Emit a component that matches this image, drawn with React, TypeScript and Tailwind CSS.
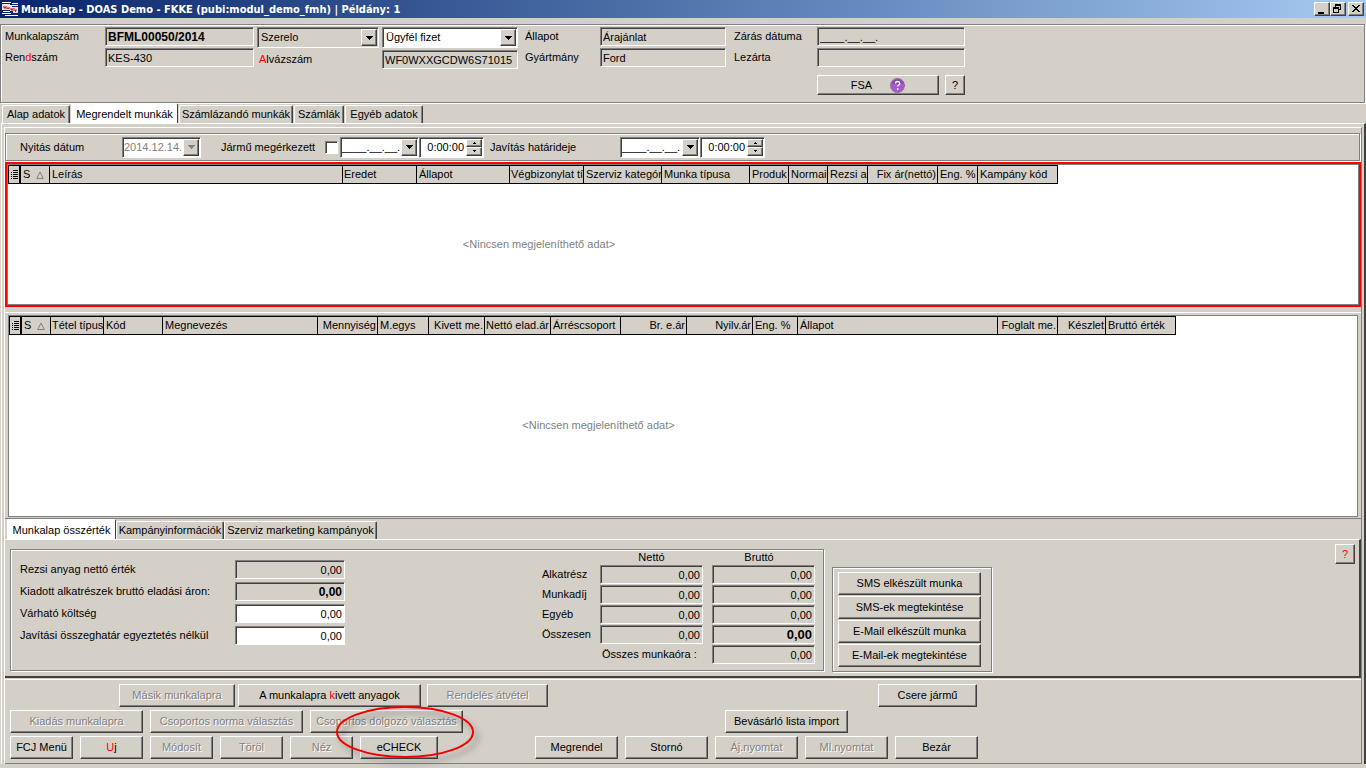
import React from "react";
import { clsx } from "clsx";

const SUNKEN =
  "border border-t-[#808080] border-l-[#808080] border-r-white border-b-white shadow-[inset_1px_1px_0_#404040]";
const RAISED =
  "border border-t-white border-l-white border-r-[#404040] border-b-[#404040] shadow-[inset_-1px_-1px_0_#808080] bg-[#d4d0c8]";
const ETCHED = "border border-[#808080] shadow-[1px_1px_0_#fff,inset_1px_1px_0_#fff]";

type FieldProps = {
  id?: string;
  label?: string;
  value: string;
  editable?: boolean;
  className?: string;
};

function Field({ id, label, value, editable, className }: FieldProps) {
  return (
    <input
      id={id}
      aria-label={label}
      defaultValue={value}
      readOnly={!editable}
      className={clsx(
        SUNKEN,
        "h-[19px] w-full min-w-0 px-[2px] outline-none",
        editable ? "bg-white" : "bg-[#d4d0c8]",
        className,
      )}
    />
  );
}

function Arrow({ disabled }: { disabled?: boolean }) {
  return (
    <svg width="7" height="4" viewBox="0 0 7 4" shapeRendering="crispEdges">
      <path d="M0 0h7v1H0zM1 1h5v1H1zM2 2h3v1H2zM3 3h1v1H3z" fill={disabled ? "#808080" : "#000"} />
    </svg>
  );
}

type ComboProps = {
  id?: string;
  label?: string;
  value: string;
  white?: boolean;
  disabled?: boolean;
  tight?: boolean;
  className?: string;
};

function Combo({ id, label, value, white, disabled, tight, className }: ComboProps) {
  return (
    <div className={clsx(SUNKEN, "relative h-[21px] p-px", white ? "bg-white" : "bg-[#d4d0c8]", className)}>
      <select
        id={id}
        aria-label={label}
        disabled={disabled}
        className={clsx(
          "h-full w-full appearance-none bg-transparent outline-none",
          tight ? "pl-0" : "pl-[2px]",
          disabled && "text-[#808080]",
        )}
      >
        <option>{value}</option>
      </select>
      <span
        className={clsx(
          RAISED,
          "pointer-events-none absolute top-px right-px bottom-px flex w-4 items-center justify-center",
        )}
      >
        <Arrow disabled={disabled} />
      </span>
    </div>
  );
}

function TimeSpin({ label }: { label: string }) {
  return (
    <div className={clsx(SUNKEN, "flex h-[21px] w-[65px] bg-white p-px")}>
      <input aria-label={label} defaultValue="0:00:00" className="w-0 flex-1 pr-[2px] text-right outline-none" />
      <div className="flex w-4 flex-col">
        <button aria-label={label + " +"} className={clsx(RAISED, "flex flex-1 items-center justify-center")}>
          <svg width="3" height="2" shapeRendering="crispEdges">
            <path d="M1 0h1v1H1zM0 1h3v1H0z" />
          </svg>
        </button>
        <button aria-label={label + " -"} className={clsx(RAISED, "flex flex-1 items-center justify-center")}>
          <svg width="3" height="2" shapeRendering="crispEdges">
            <path d="M0 0h3v1H0zM1 1h1v1H1z" />
          </svg>
        </button>
      </div>
    </div>
  );
}

type BtnProps = { children: React.ReactNode; disabled?: boolean; className?: string };

function Btn({ children, disabled, className }: BtnProps) {
  return (
    <button
      disabled={disabled}
      className={clsx(
        RAISED,
        "h-[23px] shrink-0 whitespace-nowrap",
        disabled && "text-[#808080] [text-shadow:1px_1px_0_#fff]",
        className,
      )}
    >
      {children}
    </button>
  );
}

function Tab({ children, active, className }: { children: React.ReactNode; active?: boolean; className: string }) {
  return (
    <button
      role="tab"
      aria-selected={!!active}
      className={clsx(
        "shrink-0 rounded-t-[2px] border border-b-0 border-t-white border-l-white border-r-[#404040] whitespace-nowrap",
        active ? "-mb-px h-[21px] bg-white" : "h-[18px] bg-[#d4d0c8] shadow-[inset_-1px_0_0_#808080]",
        className,
      )}
    >
      {children}
    </button>
  );
}

type Col = { t: string; w: number; r?: boolean };

const JOB_COLS: Col[] = [
  { t: "Leírás", w: 293 },
  { t: "Eredet", w: 74 },
  { t: "Állapot", w: 93 },
  { t: "Végbizonylat tí", w: 74 },
  { t: "Szerviz kategór", w: 78 },
  { t: "Munka típusa", w: 88 },
  { t: "Produk", w: 39 },
  { t: "Normai", w: 39 },
  { t: "Rezsi a", w: 40 },
  { t: "Fix ár(nettó)", w: 70, r: true },
  { t: "Eng. %", w: 40 },
  { t: "Kampány kód", w: 80 },
];

const ITEM_COLS: Col[] = [
  { t: "Tétel típus", w: 53 },
  { t: "Kód", w: 59 },
  { t: "Megnevezés", w: 155 },
  { t: "Mennyiség", w: 60, r: true },
  { t: "M.egys", w: 51 },
  { t: "Kivett me.", w: 56, r: true },
  { t: "Nettó elad.ár", w: 66, r: true },
  { t: "Árréscsoport", w: 70 },
  { t: "Br. e.ár", w: 66, r: true },
  { t: "Nyilv.ár", w: 66, r: true },
  { t: "Eng. %", w: 45 },
  { t: "Állapot", w: 200 },
  { t: "Foglalt me.", w: 60, r: true },
  { t: "Készlet", w: 48, r: true },
  { t: "Bruttó érték", w: 70 },
];

function DataTable({ cols, cellClass }: { cols: Col[]; cellClass: string }) {
  const total = cols.reduce((s, c) => s + c.w, 42);
  return (
    <table className="table-fixed border-separate border-spacing-0" style={{ width: total }}>
      <colgroup>
        <col className="w-[13px]" />
        <col className="w-[29px]" />
        {cols.map((c, i) => (
          <col key={i} style={{ width: c.w }} />
        ))}
      </colgroup>
      <thead>
        <tr className="h-[19px] bg-[#d4d0c8]">
          <th className="border border-r-2 border-black p-0" aria-label="Oszlopok">
            <svg className="mx-auto block" width="7" height="10" shapeRendering="crispEdges">
              <path d="M2 0h5v1H2zM0 2h1v1H0zM2 2h5v1H2zM2 4h5v1H2zM0 4h1v1H0zM2 6h5v1H2zM0 6h1v1H0zM2 8h5v1H2zM0 8h1v1H0z" />
            </svg>
          </th>
          <th className="border-y border-r border-black p-0 pl-[2px] text-left font-normal">
            <span className="flex items-center gap-[6px]">
              S
              <svg width="8" height="8" viewBox="0 0 8 8">
                <path d="M4 1L7.3 7.5H.7z" fill="none" stroke="#808080" />
              </svg>
            </span>
          </th>
          {cols.map((c, i) => (
            <th
              key={i}
              className={clsx(
                "border-y border-r border-black p-0 font-normal whitespace-nowrap",
                c.r ? "pr-px text-right" : "text-left",
                !c.r && (c.w === 74 || c.w === 53 ? "pl-px" : "pl-[2px]"),
              )}
            >
              {c.t}
            </th>
          ))}
        </tr>
      </thead>
      <tbody>
        <tr>
          <td colSpan={cols.length + 2} className={clsx("pl-3 text-center align-middle text-[#808080]", cellClass)}>
            &lt;Nincsen megjeleníthető adat&gt;
          </td>
        </tr>
      </tbody>
    </table>
  );
}

function TitleBar() {
  return (
    <header className="flex h-[18px] items-center bg-linear-to-r from-[#0a246a] to-[#a6caf0] pr-[2px] pl-[2px]">
      <svg width="16" height="14" viewBox="0 0 16 14" shapeRendering="crispEdges">
        <path d="M0 0h9v1H0zM10 1h6v1h-6zM10 3h6v1h-6zM1 9h7v1H1zM0 11h9v1H0zM3 13h13v1H3z" fill="#fff" />
        <path d="M0 2h8v1h2v2h6v6h-5V9H8V8H0z" fill="#ece4e4" />
        <path d="M1 4h4v1h3v2H2V6H1zM8 6h5v1h2v2H9V8H8z" fill="#cc7f80" />
        <path d="M2 5h2v1H2zM5 6h2v1H5zM9 7h2v1H9zM13 8h1v2h-1z" fill="#a03838" />
      </svg>
      <h1 className="ml-[3px] flex-1 font-['DejaVu_Sans_Condensed','DejaVu_Sans',sans-serif] text-[11px] font-bold whitespace-nowrap text-white">
        Munkalap - DOAS Demo - FKKE (pubi:modul_demo_fmh) | Példány: 1
      </h1>
      <div className="flex">
        <button aria-label="Kis méret" className={clsx(RAISED, "h-[14px] w-4")}>
          <svg width="14" height="12" shapeRendering="crispEdges">
            <path d="M3 9h6v2H3z" />
          </svg>
        </button>
        <button aria-label="Előző méret" className={clsx(RAISED, "h-[14px] w-4")}>
          <svg width="14" height="12" shapeRendering="crispEdges">
            <path d="M4 1h6v6H8V6h1V3H5v1H4zM2 4h6v6H2zM3 6v3h4V6z" fillRule="evenodd" />
          </svg>
        </button>
        <button aria-label="Bezárás" className={clsx(RAISED, "ml-[2px] h-[14px] w-4")}>
          <svg width="14" height="12" shapeRendering="crispEdges">
            <path d="M3 2h2v1h1v1h2V3h1V2h2v1h-1v1H9v1H8v1h1v1h1v1h1v1H9V8H8V7H6v1H5v1H3V8h1V7h1V6h1V5H5V4H4V3H3z" />
          </svg>
        </button>
      </div>
    </header>
  );
}

function HeaderBox() {
  return (
    <section className={clsx(ETCHED, "mt-[6px] mr-px flex items-start pt-[2px] pb-[7px] pl-1")}>
      <div className="grid grid-cols-[100px_149px] items-center gap-y-[2px]">
        <label htmlFor="munkalapszam">Munkalapszám</label>
        <Field id="munkalapszam" value="BFML00050/2014" className="text-[12px] font-bold" />
        <label htmlFor="rendszam">
          Ren<span className="text-[#f00]">d</span>szám
        </label>
        <Field id="rendszam" value="KES-430" />
      </div>
      <div className="ml-[3px] grid grid-cols-[125px_136px] items-center gap-y-[2px]">
        <Combo label="Szerep" value="Szerelo" className="mr-[3px]" />
        <Combo label="Fizetés" value="Ügyfél fizet" white />
        <label htmlFor="alvazszam" className="pl-[2px]">
          <span className="text-[#f00]">A</span>lvázszám
        </label>
        <Field id="alvazszam" value="WF0WXXGCDW6S71015" />
      </div>
      <div className="ml-[7px] grid grid-cols-[75px_126px] items-center gap-y-[2px]">
        <label htmlFor="allapot">Állapot</label>
        <Field id="allapot" value="Árajánlat" />
        <label htmlFor="gyartmany">Gyártmány</label>
        <Field id="gyartmany" value="Ford" />
      </div>
      <div className="ml-2 grid grid-cols-[83px_148px] items-center gap-y-[2px]">
        <label htmlFor="zaras">Zárás dátuma</label>
        <Field id="zaras" value="____.__.__." />
        <label htmlFor="lezarta">Lezárta</label>
        <Field id="lezarta" value="" />
        <div className="col-start-2 mt-[6px] flex gap-[6px]">
          <button className={clsx(RAISED, "flex h-5 w-[122px] items-center justify-center gap-[18px]")}>
            FSA
            <svg width="15" height="15" viewBox="0 0 15 15">
              <circle cx="7.5" cy="7.5" r="7" fill="#a45cc8" stroke="#8a50aa" strokeDasharray="2 1" />
              <path d="M2 6a5.6 5.6 0 0 1 11 0z" fill="#7e48a4" />
              <path d="M5.4 5.6c0-2.8 4.4-2.8 4.4-.2 0 1.7-2.1 1.6-2.1 3.2" fill="none" stroke="#fff" strokeWidth="1.4" />
              <circle cx="7.7" cy="11" r=".9" fill="#fff" />
            </svg>
          </button>
          <button className={clsx(RAISED, "h-5 w-5")}>?</button>
        </div>
      </div>
    </section>
  );
}

function DateRow() {
  return (
    <section className={clsx(ETCHED, "mt-[5px] mr-px flex h-7 items-center pl-[14px]")}>
      <label htmlFor="nyitas" className="w-[102px]">
        Nyitás dátum
      </label>
      <Combo id="nyitas" value="2014.12.14." white disabled tight className="w-[79px]" />
      <label htmlFor="megerkezett" className="ml-5 w-[104px]">
        Jármű megérkezett
      </label>
      <input
        id="megerkezett"
        type="checkbox"
        className={clsx(SUNKEN, "h-[13px] w-[13px] appearance-none bg-white")}
      />
      <Combo label="Érkezés dátuma" value="____.__.__." white tight className="ml-[2px] w-[79px]" />
      <TimeSpin label="Érkezés ideje" />
      <label htmlFor="hatarido" className="ml-[6px] w-[130px]">
        Javítás határideje
      </label>
      <Combo id="hatarido" value="____.__.__." white tight className="w-[80px]" />
      <TimeSpin label="Határidő ideje" />
    </section>
  );
}

function AmountLabel({ id, children }: { id: string; children: React.ReactNode }) {
  return (
    <label htmlFor={id} className="whitespace-nowrap">
      {children}
    </label>
  );
}

function Totals() {
  const rows = ["Alkatrész", "Munkadíj", "Egyéb", "Összesen"];
  return (
    <div className="grid grid-cols-[58px_103px_103px] items-center gap-y-px">
      <span />
      <span className="text-center leading-[14px]">Nettó</span>
      <span className="ml-[9px] text-center leading-[14px]">Bruttó</span>
      {rows.map((r) => (
        <React.Fragment key={r}>
          <span>{r}</span>
          <Field label={r + " nettó"} value="0,00" className="text-right" />
          <div className="-mr-[9px] pl-[9px]">
            <Field
              label={r + " bruttó"}
              value="0,00"
              className={clsx("text-right", r === "Összesen" && "text-[13px] font-bold")}
            />
          </div>
        </React.Fragment>
      ))}
      <label htmlFor="munkaora" className="col-span-2 pl-[60px]">
        Összes munkaóra :
      </label>
      <div className="-mr-[9px] pl-[9px]">
        <Field id="munkaora" value="0,00" className="text-right" />
      </div>
    </div>
  );
}

function SummaryPanel() {
  return (
    <section className="flex items-start border-t border-r-2 border-b-2 border-t-white border-r-[#404040] border-b-[#404040] pt-[9px] pr-1 pb-1 pl-[5px]">
      <div className={clsx(ETCHED, "flex h-[122px] w-[814px] items-start pl-[9px]")}>
        <div className="mt-[10px] grid grid-cols-[215px_110px] items-center gap-y-[3px]">
          <AmountLabel id="rezsi">Rezsi anyag nettó érték</AmountLabel>
          <Field id="rezsi" value="0,00" className="text-right" />
          <AmountLabel id="kiadott">Kiadott alkatrészek bruttó eladási áron:</AmountLabel>
          <Field id="kiadott" value="0,00" className="text-right text-[12px] font-bold" />
          <AmountLabel id="varhato">Várható költség</AmountLabel>
          <Field id="varhato" value="0,00" editable className="text-right" />
          <AmountLabel id="javitasi">Javítási összeghatár egyeztetés nélkül</AmountLabel>
          <Field id="javitasi" value="0,00" editable className="text-right" />
        </div>
        <div className="ml-[197px]">
          <Totals />
        </div>
      </div>
      <div className={clsx(ETCHED, "mt-[18px] ml-2 flex w-[160px] flex-col gap-px py-1 pr-[10px] pl-[5px]")}>
        <Btn>SMS elkészült munka</Btn>
        <Btn>SMS-ek megtekintése</Btn>
        <Btn>E-Mail elkészült munka</Btn>
        <Btn>E-Mail-ek megtekintése</Btn>
      </div>
      <button className={clsx(RAISED, "-mt-[5px] ml-auto h-5 w-5 text-[#f00]")}>?</button>
    </section>
  );
}

function ActionPanel() {
  return (
    <footer className="relative mt-px flex flex-col gap-[3px] border-t border-b border-t-white border-b-[#808080] pt-1 pb-1 pl-[5px]">
      <div className="flex">
        <Btn disabled className="ml-[109px] w-[116px]">Másik munkalapra</Btn>
        <Btn className="ml-[3px] w-[183px]">
          A munkalapra <span className="text-[#f00]">k</span>ivett anyagok
        </Btn>
        <Btn disabled className="ml-[6px] w-[121px]">Rendelés átvétel</Btn>
        <Btn className="ml-[330px] w-[99px]">Csere jármű</Btn>
      </div>
      <div className="flex gap-[7px]">
        <Btn disabled className="w-[133px]">Kiadás munkalapra</Btn>
        <Btn disabled className="w-[153px]">Csoportos norma választás</Btn>
        <Btn disabled className="w-[153px]">Csoportos dolgozó választás</Btn>
        <Btn className="ml-[255px] w-[123px]">Bevásárló lista import</Btn>
      </div>
      <div className="flex gap-[7px]">
        <Btn className="w-[63px]">FCJ Menü</Btn>
        <Btn className="w-[63px]">
          <span className="text-[#f00]">U</span>j
        </Btn>
        <Btn disabled className="w-[63px]">Módosít</Btn>
        <Btn disabled className="w-[63px]">Töröl</Btn>
        <Btn disabled className="w-[63px]">Néz</Btn>
        <Btn className="w-[78px]">eCHECK</Btn>
        <Btn className="ml-[90px] w-[83px]">Megrendel</Btn>
        <Btn className="w-[83px]">Stornó</Btn>
        <Btn disabled className="w-[83px]">Áj.nyomtat</Btn>
        <Btn disabled className="w-[83px]">Ml.nyomtat</Btn>
        <Btn className="w-[83px]">Bezár</Btn>
      </div>
      <svg className="pointer-events-none absolute top-[22px] left-[326px]" width="156" height="68" viewBox="0 0 156 68">
        <defs>
          <filter id="soft" x="-20%" y="-30%" width="150%" height="170%">
            <feDropShadow dx="4" dy="5" stdDeviation="3" floodColor="#000" floodOpacity="0.4" />
          </filter>
        </defs>
        <ellipse cx="74" cy="30" rx="68" ry="25" fill="none" stroke="#f00000" strokeWidth="2" filter="url(#soft)" />
      </svg>
    </footer>
  );
}

export default function App() {
  return (
    <div className="flex min-h-screen flex-col overflow-hidden bg-[#d4d0c8] pb-1 font-['Liberation_Sans',Arial,sans-serif] text-[11px] leading-[13px] text-black">
      <TitleBar />
      <HeaderBox />
      <nav role="tablist" className="mt-px flex h-[19px] items-end gap-px pl-[2px]">
        <Tab className="w-[68px]">Alap adatok</Tab>
        <Tab active className="w-[107px]">Megrendelt munkák</Tab>
        <Tab className="w-[114px]">Számlázandó munkák</Tab>
        <Tab className="w-[50px]">Számlák</Tab>
        <Tab className="w-[78px]">Egyéb adatok</Tab>
      </nav>
      <main className="ml-px flex flex-1 flex-col border-t border-r-2 border-l border-t-white border-r-[#404040] border-l-white pt-[3px] pr-[2px] pl-[2px]">
        <div className="flex flex-1 flex-col border-t border-r border-l border-t-white border-r-[#808080] border-l-white">
          <DateRow />
          <section className="mt-px border-2 border-[#f00] bg-white">
            <div className="overflow-hidden border border-[#808080]">
              <DataTable cols={JOB_COLS} cellClass="h-[120px]" />
            </div>
          </section>
          <section className="mt-[5px] flex flex-1 flex-col border-t border-b border-t-white border-b-[#808080] px-[3px] pt-[2px] pb-px">
            <div className="flex-1 overflow-hidden border border-[#808080] bg-white">
              <DataTable cols={ITEM_COLS} cellClass="h-[181px]" />
            </div>
          </section>
          <nav role="tablist" className="flex h-5 items-end pl-[2px]">
            <Tab active className="w-[109px]">Munkalap összérték</Tab>
            <Tab className="w-[108px]">Kampányinformációk</Tab>
            <Tab className="w-[153px]">Szerviz marketing kampányok</Tab>
          </nav>
          <SummaryPanel />
          <ActionPanel />
        </div>
      </main>
    </div>
  );
}
